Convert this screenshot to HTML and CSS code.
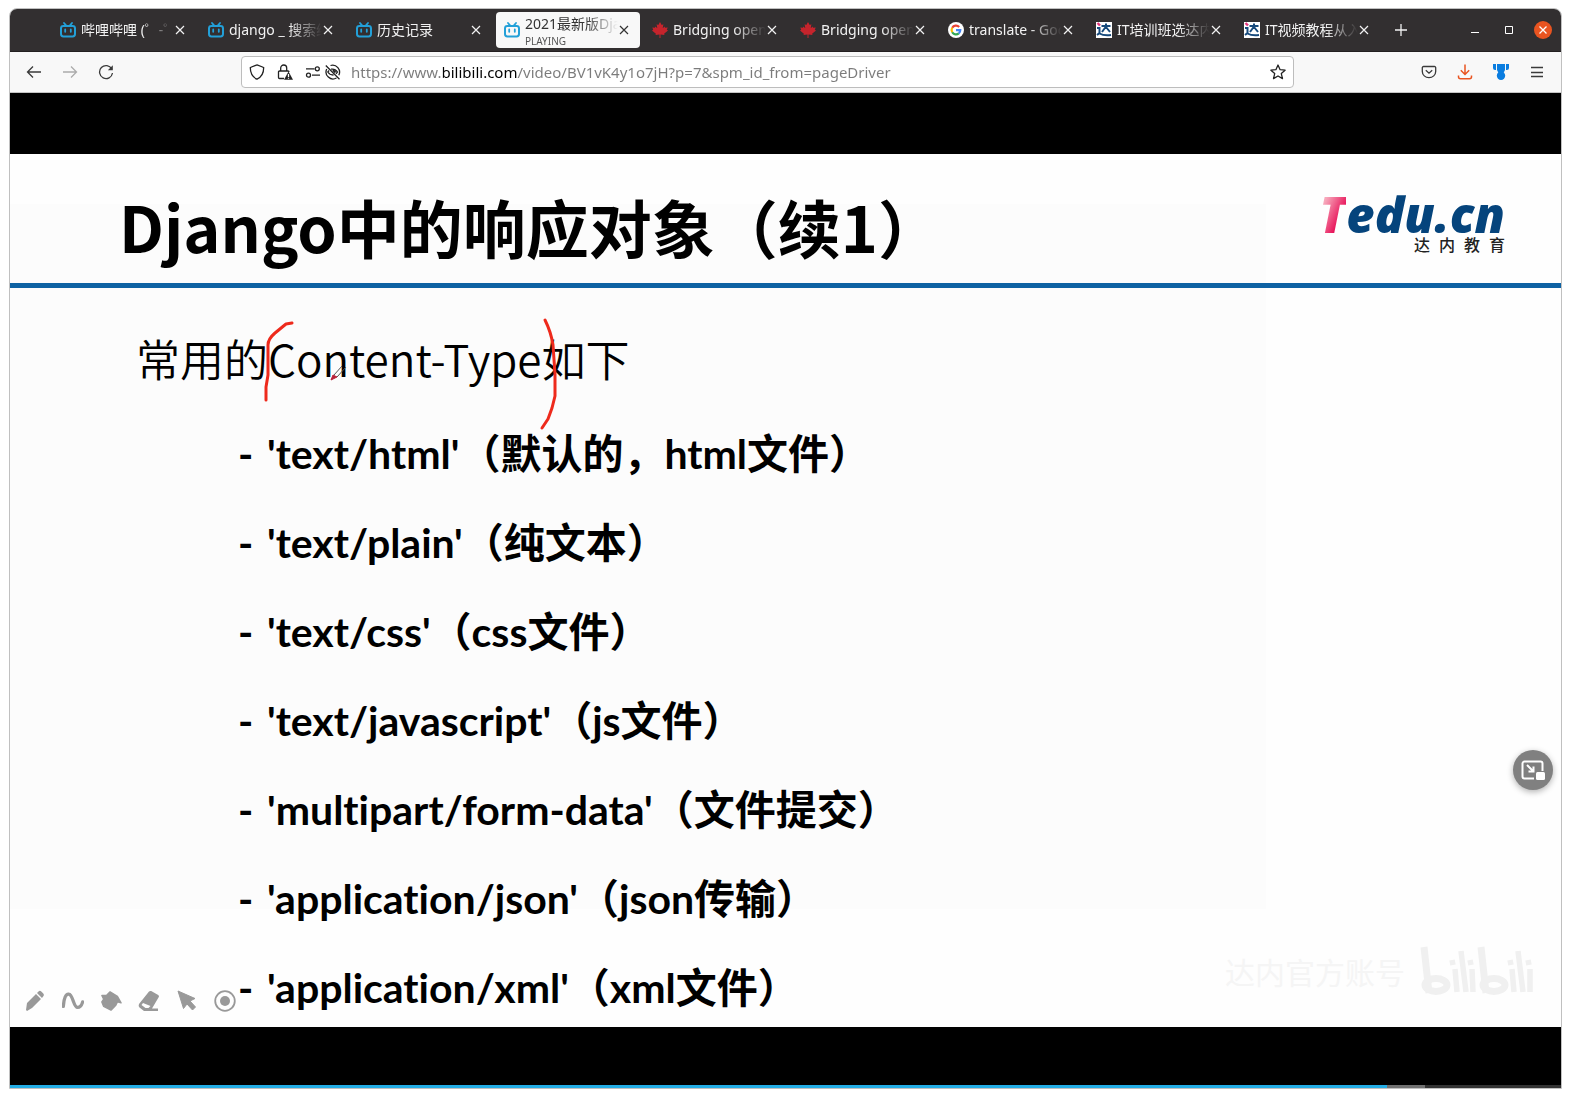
FILE: index.html
```html
<!DOCTYPE html>
<html lang="zh-CN">
<head>
<meta charset="utf-8">
<title>2021最新版Django</title>
<link rel="stylesheet" href="styles.css">
</head>
<body>
<svg class="defs" aria-hidden="true">
  <symbol id="bili" viewBox="0 0 16 16"><rect x="1" y="4" width="14" height="10.4" rx="2.4" fill="none" stroke="#23a0d8" stroke-width="2"/><path d="M4 1l2 2.4M12 1l-2 2.4M5.2 7.4v2.4M10.8 7.4v2.4" stroke="#23a0d8" stroke-width="1.8" stroke-linecap="round"/></symbol>
  <symbol id="maple" viewBox="0 0 16 16"><path d="M8 0l1.7 3.1 1.7-.8-.7 3.9 1.9-1.6.5 1.2 2.6-.4-.9 2.3 1.2.7-3.9 3.3.4 1.4-4-.5V16h-1v-3.400l-4 .5.4-1.400L0 8.400l1.200-.7L.3 5.400l2.600.4.5-1.200 1.900 1.600-.7-3.900 1.700.8z" fill="#c5242c"/></symbol>
  <symbol id="tedu" viewBox="0 0 16 16"><rect width="16" height="16" fill="#fff"/><path d="M5.500 4h9M10 1.500v3L6 10M10 5l4 5M1 6h2.500v5L1 13M3.500 11.500Q8 14 15 13" fill="none" stroke="#174a7c" stroke-width="2"/><path d="M1.500 1l2.500 2.500" stroke="#e4367c" stroke-width="2.400"/></symbol>
  <symbol id="x" viewBox="0 0 12 12"><path d="M2 2l8 8M10 2l-8 8" stroke="currentColor" stroke-width="1.200"/></symbol>
</svg>
<div class="window">
  <header class="tabbar">
    <div class="tabs">
      <div class="tab"><svg class="fav"><use href="#bili"/></svg><span class="label">哔哩哔哩 (゜-゜)つロ</span><button class="close" aria-label="关闭"><svg><use href="#x"/></svg></button></div>
      <div class="tab"><svg class="fav"><use href="#bili"/></svg><span class="label">django _ 搜索结果</span><button class="close" aria-label="关闭"><svg><use href="#x"/></svg></button></div>
      <div class="tab"><svg class="fav"><use href="#bili"/></svg><span class="label">历史记录</span><button class="close" aria-label="关闭"><svg><use href="#x"/></svg></button></div>
      <div class="tab active"><svg class="fav"><use href="#bili"/></svg><span class="label">2021最新版Django<small>PLAYING</small></span><button class="close" aria-label="关闭"><svg><use href="#x"/></svg></button></div>
      <div class="tab"><svg class="fav"><use href="#maple"/></svg><span class="label">Bridging open</span><button class="close" aria-label="关闭"><svg><use href="#x"/></svg></button></div>
      <div class="tab"><svg class="fav"><use href="#maple"/></svg><span class="label">Bridging open</span><button class="close" aria-label="关闭"><svg><use href="#x"/></svg></button></div>
      <div class="tab"><svg class="fav" viewBox="0 0 16 16"><circle cx="8" cy="8" r="8" fill="#fff"/><g fill="none" stroke-width="2.200"><path d="M4.200 5.800A4.400 4.400 0 0 1 11.200 4.900" stroke="#ea4335"/><path d="M4.200 5.800a4.400 4.400 0 0 0 0 4.400" stroke="#fbbc05"/><path d="M4.200 10.200a4.400 4.400 0 0 0 6.600 1.200" stroke="#34a853"/><path d="M8 8.100h4.300a4.400 4.400 0 0 1-1.500 3.300" stroke="#4285f4"/></g></svg><span class="label">translate - Google</span><button class="close" aria-label="关闭"><svg><use href="#x"/></svg></button></div>
      <div class="tab"><svg class="fav"><use href="#tedu"/></svg><span class="label">IT培训班选达内</span><button class="close" aria-label="关闭"><svg><use href="#x"/></svg></button></div>
      <div class="tab"><svg class="fav"><use href="#tedu"/></svg><span class="label">IT视频教程从入门</span><button class="close" aria-label="关闭"><svg><use href="#x"/></svg></button></div>
    </div>
    <button class="newtab" aria-label="新标签页"><svg viewBox="0 0 12 12"><path d="M6 0v12M0 6h12" stroke="currentColor" stroke-width="1.300"/></svg></button>
    <div class="controls">
      <button aria-label="最小化"><svg viewBox="0 0 10 10"><path d="M1 7.500h8" stroke="#fff"/></svg></button>
      <button aria-label="最大化"><svg viewBox="0 0 10 10"><path d="M1.500 1.500h7v7h-7z" fill="none" stroke="#fff"/></svg></button>
      <button class="quit" aria-label="关闭窗口"><svg viewBox="0 0 10 10"><path d="M1.500 1.500l7 7M8.500 1.500l-7 7" stroke="#fff" stroke-width="1.300"/></svg></button>
    </div>
  </header>

  <nav class="toolbar">
    <button aria-label="后退"><svg viewBox="0 0 16 16"><path d="M15 8H1.500M7 2.500L1.500 8 7 13.500"/></svg></button>
    <button class="off" aria-label="前进" disabled><svg viewBox="0 0 16 16"><path d="M1 8h13.500M9 2.500L14.500 8 9 13.500"/></svg></button>
    <button aria-label="刷新"><svg viewBox="0 0 16 16"><path d="M13.800 5A6.500 6.500 0 1 0 14.500 9"/><path d="M14.800 1.200v5h-5z" fill="#3a3a3a" stroke="none"/></svg></button>
    <div class="urlbar">
      <svg class="shield" viewBox="0 0 16 16"><path d="M8 .9l5.500 2.100 1.200.6C14.700 9 12.500 13.200 8 15.200 3.500 13.200 1.300 9 1.300 3.600L2.500 3z"/></svg>
      <svg class="lock" viewBox="0 0 16 16"><path d="M7 14.500H2.500A1 1 0 0 1 1.500 13.500V8a1 1 0 0 1 1-1h8.500a1 1 0 0 1 1 1M3.700 7V4a3 3 0 0 1 6 0v3"/><path d="M11.500 7.500l4.500 8.300H7z" fill="#222" stroke="none"/><path d="M11.500 10v3M11.500 13.800v1" stroke="#fff"/></svg>
      <svg class="perm" viewBox="0 0 16 16"><path d="M1 4.800h8.500M7 11.200h8"/><circle cx="12.300" cy="4.800" r="2"/><circle cx="3.500" cy="11.200" r="2"/></svg>
      <svg class="perm" viewBox="0 0 16 16"><path d="M5.500 1.500a7 7 0 0 1 8.300 9.800M11.500 14A7 7 0 0 1 1.700 5M.8 1.500l13.700 13.700M6 5.200q4-.8 6.500 2.800l-1.500 1.800M4 6.500L2.800 8q2.200 3.300 5.700 3"/><path d="M8 6l2.500 2.500" stroke-width="2"/></svg>
      <input type="text" aria-label="网址" value="https://www.bilibili.com/video/BV1vK4y1o7jH?p=7&amp;spm_id_from=pageDriver">
      <button aria-label="收藏"><svg viewBox="0 0 16 16"><path d="M8 1l2.100 4.700 5 .5-3.800 3.400 1.200 5L8 12l-4.500 2.600 1.200-5L.9 6.200l5-.5z" stroke-linejoin="round"/></svg></button>
    </div>
    <button aria-label="Pocket"><svg viewBox="0 0 16 16"><path d="M2.500 2.500h11a1.200 1.200 0 0 1 1.200 1.200V7.500a6.700 6.200 0 0 1-13.400 0V3.700A1.200 1.200 0 0 1 2.500 2.500zM4.800 6.200L8 9.200l3.200-3"/></svg></button>
    <button class="download" aria-label="下载"><svg viewBox="0 0 16 16"><path d="M8 .5v9.800M3.800 6.300L8 10.500l4.200-4.200M1.500 11.500v1.200a2 2 0 0 0 2 2h9a2 2 0 0 0 2-2v-1.200" stroke-width="1.500"/></svg></button>
    <button aria-label="扩展"><svg viewBox="0 0 16 16"><path d="M0 0h3v6H2a2 2 0 0 1-2-2zM4 0h8v6l-1.500 3h-5L4 6zM13 0h3v4a2 2 0 0 1-2 2h-1z" fill="#0a7de0" stroke="none"/><circle cx="8" cy="11.800" r="4.200" fill="#0a7de0" stroke="none"/></svg></button>
    <button aria-label="菜单"><svg viewBox="0 0 16 16"><path d="M2 3.500h12M2 8.500h12M2 12.500h12"/></svg></button>
  </nav>

  <main class="video">
    <article class="slide">
      <header class="slide-head">
        <h1>Django中的响应对象（续1）</h1>
        <div class="logo"><div class="brand"><span class="t">T</span>edu.cn</div><div class="sub"><span>达</span><span>内</span><span>教</span><span>育</span></div></div>
      </header>
      <div class="slide-body">
        <p class="lead">常用的Content-Type如下</p>
        <ul>
          <li>'text/html'（默认的，html文件）</li>
          <li>'text/plain'（纯文本）</li>
          <li>'text/css'（css文件）</li>
          <li>'text/javascript'（js文件）</li>
          <li>'multipart/form-data'（文件提交）</li>
          <li>'application/json'（json传输）</li>
          <li>'application/xml'（xml文件）</li>
        </ul>
      </div>
      <svg class="ink" viewBox="0 0 320 120" aria-hidden="true">
        <g fill="none" stroke="#ee2a1c" stroke-width="3" stroke-linecap="round" stroke-linejoin="round"><path d="M32 9l-6 1-11 9q-7 6-7 12v30l-2 12v13"/><path d="M285 6q6 12 8 25l2 29v22l-3 12-4 11-6 9"/></g>
        <path d="M74 61l8-9M77 63l9-10" stroke="#555" fill="none"/><path d="M71 66l2-5 4 2z" fill="#b8213a" stroke="#b8213a"/>
      </svg>
      <div class="pens">
        <button aria-label="铅笔"><svg viewBox="0 0 22 22"><path d="M2 20l1-7L12 4l5 5-9 9-5 3zM13 3l1.500-1.500a2 2 0 0 1 2.800 0l2 2a2 2 0 0 1 0 2.800L18 8z"/></svg></button>
        <button aria-label="曲线"><svg viewBox="0 0 24 22"><path d="M1.500 17C2 8 4 3 7.500 3.500 12 4 12.500 18 17 18c3 0 4.500-2.500 5.500-6" fill="none" stroke="#999" stroke-width="3.500" stroke-linecap="round"/></svg></button>
        <button aria-label="填充"><svg viewBox="0 0 24 22"><path d="M2 5l5 0 4-4 8 5 4 7-4-1-2 4-5 5-8-4-2-5 2-3z" stroke="#999" stroke-width="1.500" stroke-linejoin="round"/></svg></button>
        <button aria-label="橡皮擦"><svg viewBox="0 0 22 22"><path d="M1 14L11 1.500q1-1 2.200-.4l7 4q1.300.8.6 2L14 18.500l6 0v2.500H6L1.500 17.500Q0 16 1 14zM5 13l-1.500 2 4 3h3l2-2z" fill-rule="evenodd"/></svg></button>
        <button aria-label="选择"><svg viewBox="0 0 22 22"><path d="M2 1l17 7.500-5 2.500 5.500 6-3 3-5.500-6-3.500 4.500z" stroke="#999" stroke-linejoin="round"/></svg></button>
        <button aria-label="聚光灯"><svg viewBox="0 0 22 22"><circle cx="11" cy="11" r="9.800" fill="none" stroke="#999" stroke-width="1.800"/><circle cx="11" cy="11" r="5"/></svg></button>
      </div>
      <div class="watermark"><span>达内官方账号</span>
        <svg viewBox="0 0 114 52" role="img" aria-label="bilibili"><g stroke="#f0f0f0" stroke-width="7" fill="none"><path d="M5 2l5 46M62 2l5 46"/><ellipse cx="17" cy="40" rx="11" ry="6.500"/><ellipse cx="75" cy="40" rx="11" ry="6.500"/></g><g stroke="#f0f0f0" stroke-width="5.500"><path d="M36 24l2 23M33 15l1 5M42 6l5 41M53 24l1 23M51 15l1 5M93 24l2 23M91 15l1 5M99 6l5 41M111 24v23M109 15l1 5"/></g></svg>
      </div>
    </article>
    <button class="pip" aria-label="画中画"><svg viewBox="0 0 26 22"><path d="M14 19.500H4.500a2 2 0 0 1-2-2v-13a2 2 0 0 1 2-2h16a2 2 0 0 1 2 2V12" fill="none" stroke="#fff" stroke-width="2"/><path d="M7 6l6 6M13.500 7.500v5h-5" fill="none" stroke="#fff" stroke-width="2"/><rect x="16" y="13" width="9" height="8" rx="1.500" fill="#fff"/></svg></button>
    <input class="progress" type="range" min="0" max="1000" value="888" aria-label="播放进度">
  </main>
</div>
</body>
</html>
```

FILE: styles.css
```css
* { box-sizing: border-box; }
body {
  margin: 0;
  padding: 8px 9px 9px;
  background: #fff;
  font-family: "Noto Sans", "Noto Sans CJK SC", sans-serif;
  font-size: 14px;
}
button { border: 0; padding: 0; background: none; color: inherit; display: grid; place-items: center; }
svg { display: block; }
.defs { position: absolute; width: 0; height: 0; }

.window { border: 1px solid #c0c0c0; border-radius: 8px 8px 0 0; overflow: hidden; }

/* tab strip */
.tabbar { display: flex; align-items: center; height: 43px; padding: 0 9px 0 40px; background: #322f30; color: #f2f2f2; border-bottom: 1px solid #231f20; }
.tabs { display: flex; flex: 0 1 1332px; min-width: 0; }
.tab { flex: 1 1 0; min-width: 0; height: 36px; margin: 0 2px; padding: 0 10px 0 8px; display: flex; align-items: center; border-radius: 4px; }
.tab.active { background: #f8f8f8; color: #333; }
.fav { flex: none; width: 16px; height: 16px; margin-right: 5px; }
.label { flex: 1; min-width: 0; overflow: hidden; white-space: nowrap; line-height: 22px; -webkit-mask-image: linear-gradient(to right, #000 65%, transparent); mask-image: linear-gradient(to right, #000 65%, transparent); }
.label small { display: block; font-size: 10px; line-height: 12px; color: #555; }
.close svg { width: 12px; height: 12px; }
.newtab { width: 38px; height: 36px; }
.newtab svg { width: 12px; height: 12px; }
.controls { display: flex; gap: 16px; margin-left: auto; align-items: center; }
.controls button { width: 18px; height: 18px; border-radius: 50%; }
.controls svg { width: 10px; height: 10px; }
.controls .quit { background: #e95420; }

/* navigation */
.toolbar { display: flex; align-items: center; height: 41px; padding: 0 6px; background: #f8f8f8; border-bottom: 1px solid #c4c4c4; }
.toolbar svg { width: 16px; height: 16px; fill: none; stroke: #3a3a3a; stroke-width: 1.3; }
.toolbar > button { flex: none; width: 36px; height: 32px; }
.toolbar .off { opacity: .4; }
.toolbar .download svg { stroke: #e95420; }
.urlbar { flex: 1; min-width: 0; display: flex; align-items: center; height: 32px; margin: 0 117px; padding: 0 7px; border: 1px solid #bdbdbd; border-radius: 4px; background: #fff; }
.toolbar .urlbar svg { flex: none; stroke: #222; }
.shield { margin-right: 12px; }
.lock { margin-right: 12px; }
.perm { margin-right: 4px; }
.urlbar input {
  flex: 1; min-width: 0; height: 28px; margin-left: 6px; padding: 0; border: 0; outline: 0;
  font: 15px "Noto Sans", sans-serif;
  color: transparent;
  background: linear-gradient(to right, #7b7b7b 92px, #000 92px 167px, #7b7b7b 167px);
  -webkit-background-clip: text; background-clip: text;
}

/* video */
.video { position: relative; background: #000; padding-top: 61px; }
.slide {
  position: relative;
  background: linear-gradient(#fcfcfc, #fcfcfc) 0 50px / 81% 705px no-repeat #fefefe;
  font-family: "Noto Sans CJK SC", sans-serif;
  color: #000;
}
.slide-head { display: flex; justify-content: space-between; height: 134px; padding: 20px 56px 0 109px; border-bottom: 5px solid #0e62a3; }
h1 { margin: 0; font-size: 63px; line-height: 104px; font-weight: 700; white-space: nowrap; }
.logo { padding-top: 20px; }
.brand { display: flex; font: italic 800 49px/40px "Open Sans", sans-serif; color: #05447c; }
.t { color: transparent; background: linear-gradient(115deg, #f7a8bb 20%, #e8175c 70%, #a83263); -webkit-background-clip: text; background-clip: text; }
.sub { display: flex; justify-content: flex-end; gap: 9px; font-size: 16px; line-height: 20px; font-weight: 500; color: #222; }
.slide-body { padding: 40px 0 10px 126px; }
.lead { margin: 0 0 36px; font-size: 44px; line-height: 60px; font-weight: 350; }
ul { list-style: none; margin: 0; padding: 0 0 0 102px; display: grid; gap: 29px; }
li { display: flex; font-family: Lato, "Noto Sans CJK SC", sans-serif; font-size: 41px; line-height: 60px; font-weight: 700; font-variant-ligatures: none; white-space: nowrap; }
li::before { content: "-"; width: 29px; }
.slide-body { padding-bottom: 9px; }
.ink { position: absolute; left: 250px; top: 160px; width: 320px; height: 120px; }
.pens { position: absolute; left: 14px; bottom: 15px; display: flex; gap: 16px; }
.pens svg { width: 22px; height: 22px; fill: #999; }
.watermark { position: absolute; right: 28px; bottom: 30px; display: flex; align-items: center; gap: 14px; font-size: 30px; line-height: 40px; color: #f5f5f5; }
.watermark svg { width: 114px; height: 52px; }
.pip { position: absolute; right: 8px; top: 657px; width: 40px; height: 40px; border-radius: 50%; background: #808080; box-shadow: 0 2px 6px rgba(0,0,0,.3); }
.pip svg { width: 26px; height: 22px; }
.progress { -webkit-appearance: none; appearance: none; display: block; width: 100%; height: 3px; margin: 58px 0 0; background: linear-gradient(to right, #23ade5 88.8%, #707070 88.8% 91.2%, #333 91.2%); }
.progress::-webkit-slider-thumb { -webkit-appearance: none; width: 0; height: 0; }
```
